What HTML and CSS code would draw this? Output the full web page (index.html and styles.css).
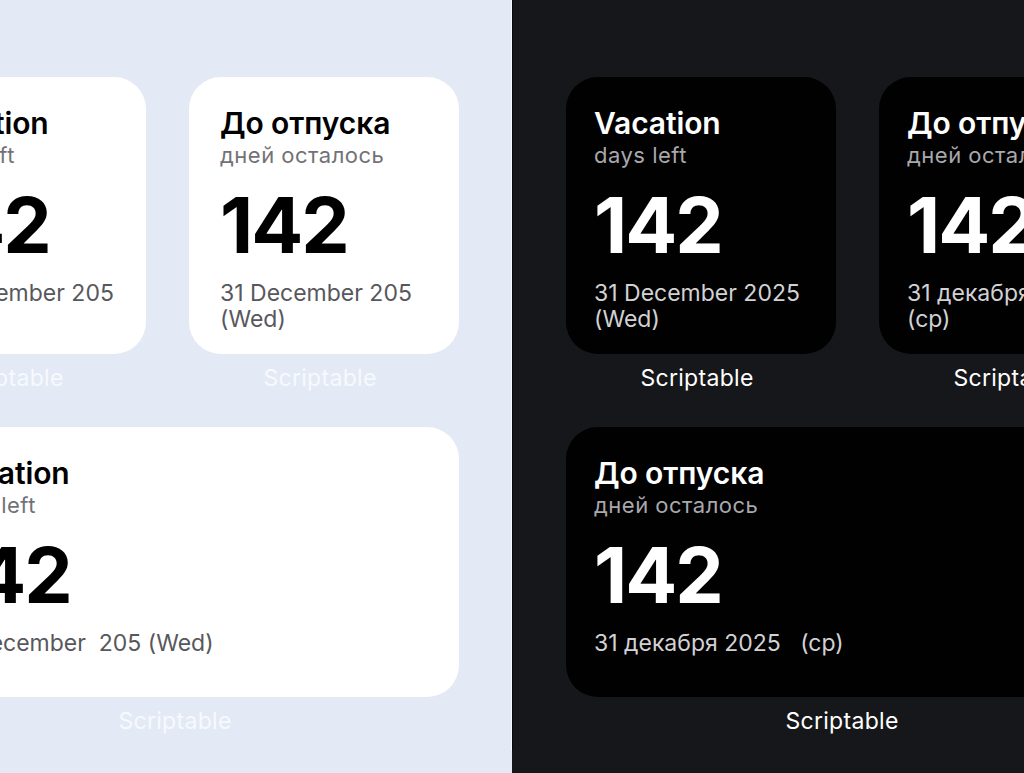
FILE: index.html
```html
<!DOCTYPE html>
<html lang="ru">
<head>
<meta charset="utf-8">
<title>Widgets</title>
<link rel="stylesheet" href="styles.css">
</head>
<body>
<div class="screen">
  <section class="panel panel-light">
    <div class="row row-end">
      <div class="widget">
        <div class="card card-inset-lg">
          <div class="title">Vacation</div>
          <div class="sub">days left</div>
          <div class="num">142</div>
          <div class="date">31 December 205<br>(Wed)</div>
        </div>
        <div class="label">Scriptable</div>
      </div>
      <div class="widget">
        <div class="card card-inset-sm">
          <div class="title">До отпуска</div>
          <div class="sub">дней осталось</div>
          <div class="num">142</div>
          <div class="date">31 December 205<br>(Wed)</div>
        </div>
        <div class="label">Scriptable</div>
      </div>
    </div>
    <div class="row row-end">
      <div class="widget widget-wide">
        <div class="card card-inset-md">
          <div class="title">Vacation</div>
          <div class="sub">days left</div>
          <div class="num">142</div>
          <div class="date">31 December  205 (Wed)</div>
        </div>
        <div class="label">Scriptable</div>
      </div>
    </div>
  </section>
  <section class="panel panel-dark">
    <div class="row">
      <div class="widget">
        <div class="card">
          <div class="title">Vacation</div>
          <div class="sub">days left</div>
          <div class="num">142</div>
          <div class="date">31 December 2025<br>(Wed)</div>
        </div>
        <div class="label">Scriptable</div>
      </div>
      <div class="widget">
        <div class="card">
          <div class="title">До отпуска</div>
          <div class="sub">дней осталось</div>
          <div class="num">142</div>
          <div class="date">31 декабря 2025<br>(ср)</div>
        </div>
        <div class="label">Scriptable</div>
      </div>
    </div>
    <div class="row">
      <div class="widget widget-wide">
        <div class="card">
          <div class="title">До отпуска</div>
          <div class="sub">дней осталось</div>
          <div class="num">142</div>
          <div class="date">31 декабря 2025   (ср)</div>
        </div>
        <div class="label">Scriptable</div>
      </div>
    </div>
  </section>
</div>
</body>
</html>
```
FILE: styles.css
```css
* { box-sizing: border-box; }
html, body {
  margin: 0;
  padding: 0;
  width: 1024px;
  height: 773px;
  overflow: hidden;
}
body {
  font-family: Inter, "Noto Sans", "Liberation Sans", sans-serif;
  -webkit-font-smoothing: antialiased;
}
.screen {
  display: flex;
  width: 1024px;
  height: 773px;
}
.panel {
  position: relative;
  width: 512px;
  height: 773px;
  overflow: hidden;
  display: flex;
  flex-direction: column;
  gap: 35px;
  padding-top: 77px;
}
.panel-light {
  background: #e3eaf5;
  padding-right: 53px;
}
.panel-light::after {
  content: "";
  position: absolute;
  top: 0;
  right: 0;
  width: 1px;
  height: 751px;
  background: #f6f8fb;
}
.panel-dark {
  background: #16171a;
  padding-left: 54px;
}
.panel-dark::before {
  content: "";
  position: absolute;
  top: 0;
  left: 0;
  width: 1px;
  height: 751px;
  background: #0a0a0b;
}
.row {
  display: flex;
  gap: 43px;
  flex-shrink: 0;
}
.row-end {
  justify-content: flex-end;
}
.widget {
  flex: 0 0 270px;
  width: 270px;
  display: flex;
  flex-direction: column;
}
.widget-wide {
  flex-basis: 560px;
  width: 560px;
}
.card {
  height: 277px;
  border-radius: 32px;
  padding: 29px 29px 0 28px;
  white-space: nowrap;
}
.widget-wide .card {
  height: 270px;
}
.card-inset-sm { padding-left: 31px; }
.card-inset-md { padding-left: 44px; }
.card-inset-lg { padding-left: 46px; }

.panel-light .card { background: #ffffff; }
.panel-dark .card { background: #010101; }

.title {
  font-size: 30px;
  line-height: 34px;
  font-weight: 600;
  letter-spacing: -0.1px;
}
.sub {
  font-size: 22px;
  line-height: 29px;
  letter-spacing: 0.5px;
  margin-top: 1px;
}
.num {
  font-size: 77px;
  line-height: 80px;
  font-weight: 700;
  letter-spacing: -2px;
  margin-top: 15px;
}
.date {
  font-size: 23px;
  line-height: 26px;
  margin-top: 15px;
  white-space: pre;
}
.label {
  margin-top: 10px;
  padding-right: 8px;
  text-align: center;
  font-size: 23px;
  line-height: 28px;
  letter-spacing: 0.3px;
}
.panel-light .title, .panel-light .num { color: #000; }
.panel-light .sub { color: #727276; }
.panel-light .date { color: #58585c; }
.panel-light .label { color: #f7f9fd; }

.panel-dark .title, .panel-dark .num { color: #fff; }
.panel-dark .sub { color: #a8a8ad; }
.panel-dark .date { color: #d2d2d4; }
.panel-dark .label { color: #fff; }
```
